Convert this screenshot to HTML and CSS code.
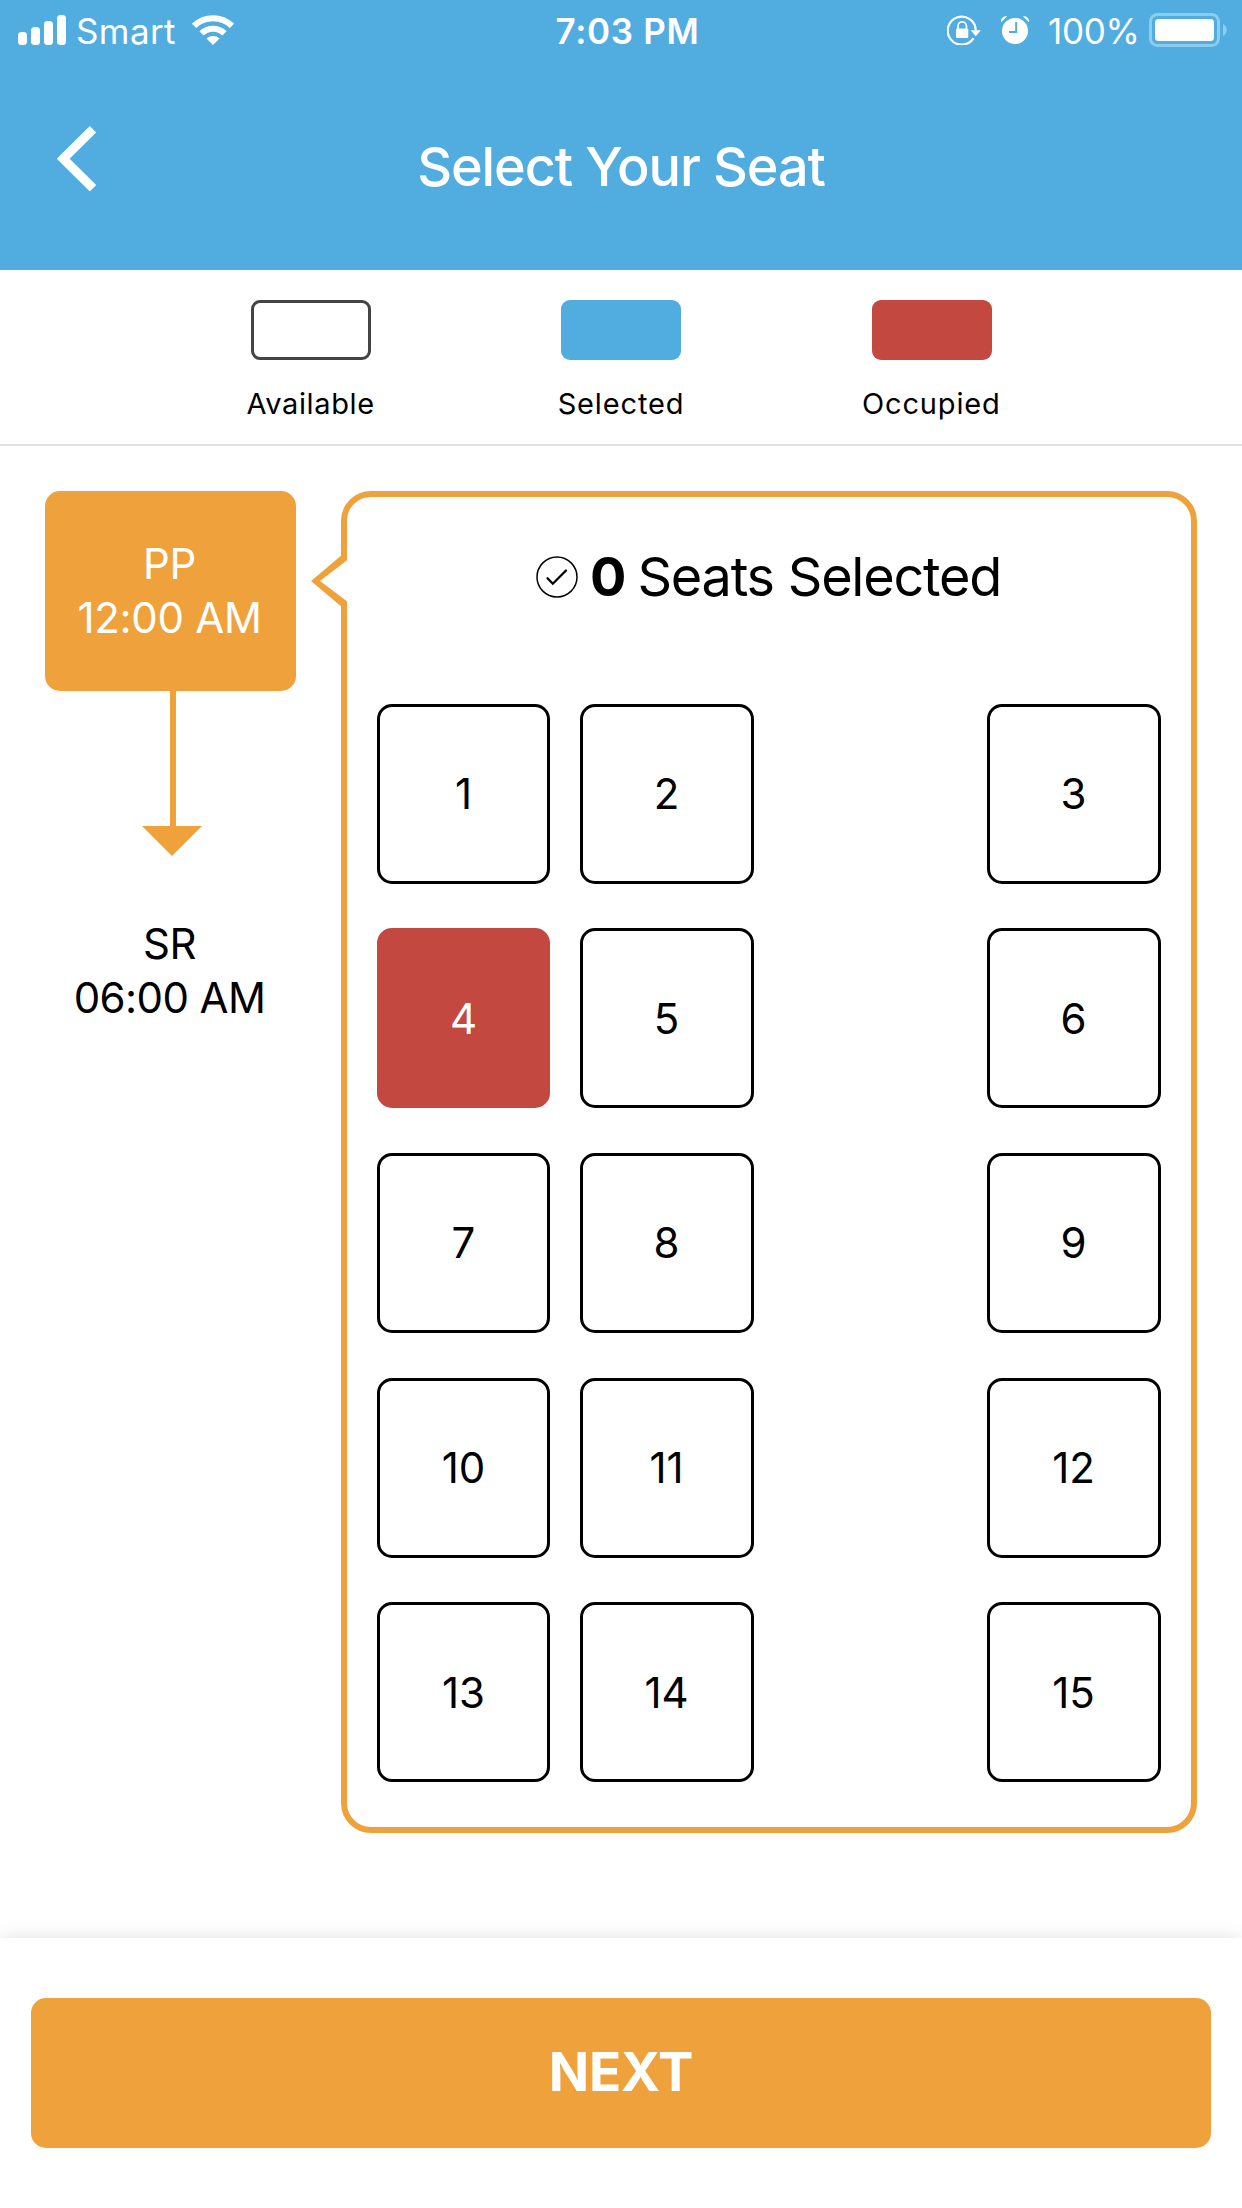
FILE: index.html
```html
<!DOCTYPE html>
<html lang="en">
<head>
<meta charset="utf-8">
<title>Select Your Seat</title>
<link rel="stylesheet" href="styles.css">
</head>
<body>
<div class="screen">
  <header class="header">
    <div class="status">
      <div class="status-side">
        <svg class="signal" width="48" height="30" viewBox="0 0 48 30" fill="#fff"><rect x="0" y="17" width="9" height="13" rx="3.5"/><rect x="13" y="12" width="9" height="18" rx="3.5"/><rect x="26" y="6" width="9" height="24" rx="3.5"/><rect x="39" y="0" width="9" height="30" rx="3.5"/></svg>
        <span class="carrier">Smart</span>
        <svg class="wifi" width="42" height="30" viewBox="0 0 42 30"><g fill="none" stroke="#fff" stroke-width="6"><path d="M2 10.800A27.500 27.500 0 0 1 40 10.800"/><path d="M9.500 18.400A16.500 16.500 0 0 1 32.500 18.400"/></g><path d="M21 30l-6.600-6.600a10 10 0 0 1 13.200 0z" fill="#fff"/></svg>
      </div>
      <span class="clock">7:03 PM</span>
      <div class="status-side status-right">
        <svg class="lock" width="34" height="30" viewBox="0 0 34 30"><path d="M26.500 23.200A14 14 0 1 1 28.700 15.500" fill="none" stroke="#fff" stroke-width="2.200"/><path d="M23.600 15.200h10.200l-5 6z" fill="#fff"/><rect x="9" y="13.500" width="12.300" height="9.500" rx="1.300" fill="#fff"/><path d="M11 14v-3a4.200 4.200 0 0 1 8.400 0v3" fill="none" stroke="#fff" stroke-width="1.700"/></svg>
        <svg class="alarm" width="28" height="28" viewBox="0 0 28 28"><circle cx="14" cy="15" r="13" fill="#fff"/><path d="M0 6.300C-.5 2 2.500-.5 6.200.3zM28 6.300C28.500 2 25.500-.5 21.800.3z" fill="#fff"/><path d="M15.200 6v10H8" fill="none" stroke="#51acdf" stroke-width="2"/></svg>
        <span class="percent">100%</span>
        <svg class="battery" width="78" height="34" viewBox="0 0 78 34"><rect x="1.500" y="1.500" width="68" height="31" rx="7" fill="none" stroke="#8acdec" stroke-width="3"/><rect x="6" y="6" width="59" height="22" rx="3.500" fill="#fff"/><path d="M74 11c5 2 5 10 0 12z" fill="#8acdec"/></svg>
      </div>
    </div>
    <div class="navbar">
      <svg class="back" width="40" height="66" viewBox="0 0 40 66"><path d="M36 3.200L6.200 32.700L36 62.300" fill="none" stroke="#fff" stroke-width="9"/></svg>
      <h1 class="title">Select Your Seat</h1>
    </div>
  </header>
  <section class="legend">
    <div class="legend-item"><i class="swatch swatch-available"></i><span class="label label-available">Available</span></div>
    <div class="legend-item"><i class="swatch swatch-selected"></i><span class="label">Selected</span></div>
    <div class="legend-item"><i class="swatch swatch-occupied"></i><span class="label">Occupied</span></div>
  </section>
  <main class="content">
    <aside class="route">
      <div class="stop stop-active"><span>PP</span><span>12:00 AM</span></div>
      <svg class="arrow" width="60" height="165" viewBox="0 0 60 165" fill="#efa23b"><path d="M28 0h6v135h26L30 165L0 135h28z"/></svg>
      <div class="stop stop-end"><span>SR</span><span>06:00 AM</span></div>
    </aside>
    <section class="panel">
      <svg class="notch" width="36" height="52" viewBox="0 0 36 52"><path d="M36 0H30V.7L0 26L30 51.300V52h6z" fill="#efa23b"/><path d="M36 5.300L9 26L36 46.300z" fill="#fff"/></svg>
      <div class="summary">
        <svg class="check" width="42" height="42" viewBox="0 0 42 42" fill="none" stroke="#000"><circle cx="21" cy="21" r="20" stroke-width="1.500"/><path d="M11.500 22.300L16.800 27.700L30 14.500" stroke-width="2.300" stroke-linecap="round"/></svg>
        <b class="count">0</b><span class="summary-text">Seats Selected</span>
      </div>
      <div class="seats">
        <div class="seat">1</div><div class="seat">2</div><div class="seat seat-window">3</div>
        <div class="seat seat-occupied">4</div><div class="seat">5</div><div class="seat seat-window">6</div>
        <div class="seat">7</div><div class="seat">8</div><div class="seat seat-window">9</div>
        <div class="seat">10</div><div class="seat">11</div><div class="seat seat-window">12</div>
        <div class="seat">13</div><div class="seat">14</div><div class="seat seat-window">15</div>
      </div>
    </section>
  </main>
  <footer class="footer"><div class="next">NEXT</div></footer>
</div>
</body>
</html>
```
FILE: styles.css
```css
* { box-sizing: border-box; }
body { margin: 0; background: #fff; color: #000; font-family: Inter, "Liberation Sans", sans-serif; }
svg { display: block; flex: none; }
.screen { width: 1242px; height: 2208px; display: flex; flex-direction: column; overflow: hidden; }

.header { height: 270px; background: #51acdf; color: #fff; flex: none; }
.status { height: 60px; padding: 0 15px 0 18px; display: grid; grid-template-columns: 1fr auto 1fr; align-items: center; font-size: 35px; line-height: 58px; white-space: nowrap; }
.status-side { display: flex; align-items: center; font-weight: 400; }
.status-right { justify-content: flex-end; }
.carrier { width: 100px; margin: 1px 16px 0 10px; letter-spacing: .4px; }
.clock { font-weight: 600; letter-spacing: .7px; padding: 1px 0 0 10px; }
.signal, .wifi, .lock, .alarm, .battery { margin-top: -1px; }
.alarm { margin-left: 20px; }
.percent { width: 92px; margin: 1px 9px 0 19px; letter-spacing: -.3px; }
.navbar { height: 210px; display: grid; grid-template-columns: 200px 1fr 200px; }
.back { margin: 66px 0 0 57px; }
.title { margin: 0; text-align: center; font-size: 54px; font-weight: 500; line-height: 60px; letter-spacing: -1.100px; padding-top: 77px; white-space: nowrap; }

.legend { height: 176px; padding: 30px 155px 0 156px; border-bottom: 2px solid #e0e0e0; display: grid; grid-template-columns: repeat(3, 1fr); flex: none; }
.legend-item { display: flex; flex-direction: column; align-items: center; gap: 26px; }
.swatch { width: 120px; height: 60px; border-radius: 9px; }
.swatch-available { border: 3px solid #444; }
.swatch-selected { background: #51acdf; }
.swatch-occupied { background: #c34840; }
.label { font-size: 29px; line-height: 36px; letter-spacing: .85px; margin-right: 1px; }
.label-available { letter-spacing: .65px; }

.content { flex: 1; padding: 45px 45px 0; display: flex; align-items: flex-start; gap: 45px; }
.route { width: 251px; display: flex; flex-direction: column; align-items: center; }
.stop { width: 251px; height: 200px; padding-right: 2px; display: flex; flex-direction: column; align-items: center; justify-content: center; font-size: 42px; line-height: 54px; white-space: nowrap; }
.stop-active { background: #efa23b; color: #fff; border-radius: 15px; letter-spacing: -.3px; }
.stop-end { margin-top: 15px; letter-spacing: -.6px; }
.arrow { margin-left: 3px; }
.panel { position: relative; width: 856px; height: 1342px; border: 6px solid #efa23b; border-radius: 30px; padding: 50px 30px 0; }
.notch { position: absolute; left: -36px; top: 58px; }
.summary { display: flex; align-items: center; justify-content: center; height: 60px; font-size: 54px; line-height: 60px; white-space: nowrap; }
.count { margin: 0 12px 0 12px; letter-spacing: -1px; }
.summary-text { letter-spacing: -1.250px; margin-right: 1px; }
.seats { margin-top: 96.800px; display: grid; grid-template-columns: 173px 174px 174px 174px; column-gap: 29.500px; row-gap: 44.600px; }
.seat { height: 180px; border: 3px solid #000; border-radius: 15px; display: flex; align-items: center; justify-content: center; font-size: 42px; }
.seat-window { grid-column: 4; }
.seat-occupied { background: #c34840; border-color: #c34840; color: #fff; }

.footer { height: 270px; flex: none; padding: 60px 31px 0; background: #fff; box-shadow: 0 0 18px rgba(0, 0, 0, .12); }
.next { height: 150px; border-radius: 15px; background: #efa23b; color: #fff; display: flex; align-items: center; justify-content: center; padding-bottom: 2px; font-size: 53px; font-weight: 700; letter-spacing: -.1px; }
```
